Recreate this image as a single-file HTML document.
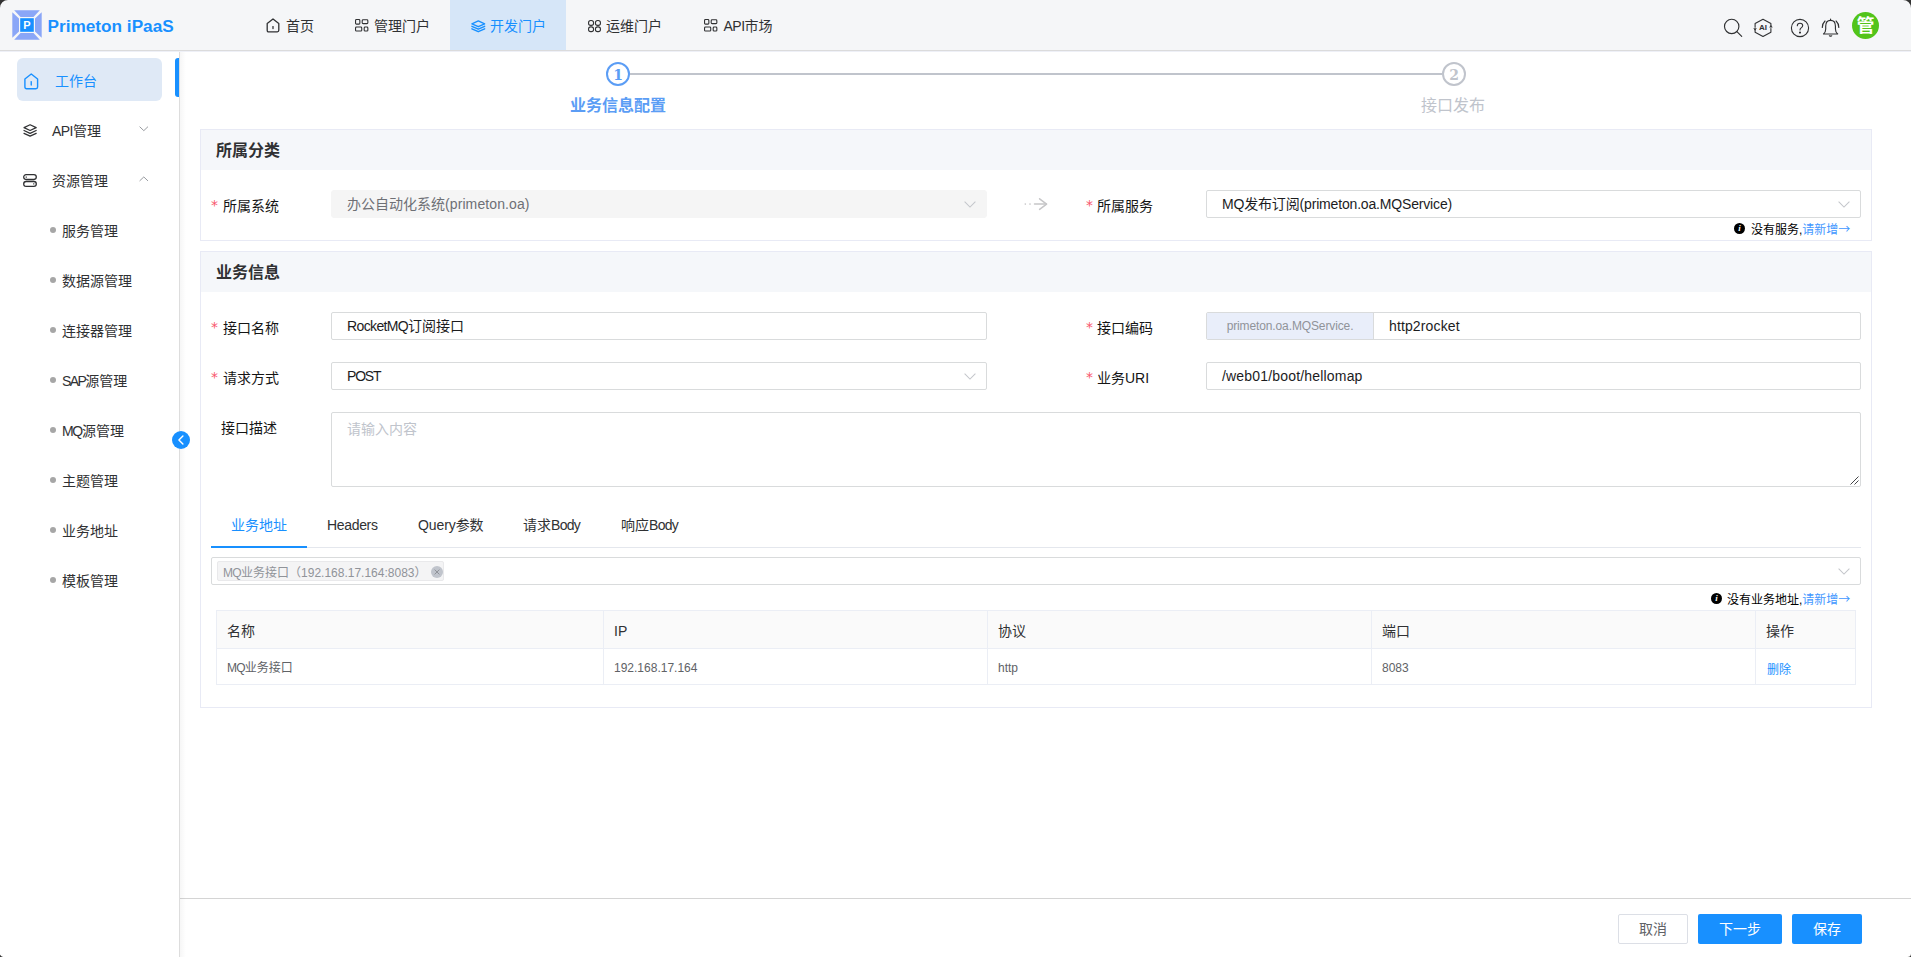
<!DOCTYPE html>
<html lang="zh-CN">
<head>
<meta charset="utf-8">
<title>Primeton iPaaS</title>
<style>
*{box-sizing:border-box;margin:0;padding:0}
html,body{width:1911px;height:957px;overflow:hidden;background:#fff}
body{font-family:"Liberation Sans","Noto Sans CJK SC",sans-serif;font-size:14px;color:#303133;position:relative}
.abs{position:absolute}
.t{position:absolute;white-space:nowrap;line-height:20px;height:20px}
svg{display:block;position:absolute;overflow:visible}

/* header */
#hd{position:absolute;left:0;top:0;width:1911px;height:50px;background:#f5f6f8;box-shadow:0 1px 0 #dbdbdc,0 2px 0 #eef0f7;z-index:5}
#brand{left:47.6px;top:14.3px;font-size:17.2px;font-weight:bold;color:#1890ff;line-height:24px;height:24px}
.nav{position:absolute;top:0;height:50px}
.nav.on{background:#d6e6f8}
.nav .t{top:16px;color:#303133}
.nav.on .t{color:#1890ff}

/* sidebar */
#sb{position:absolute;left:0;top:50px;width:180px;height:907px;background:#fff;border-right:1px solid #dddddd;z-index:2}
#sbshadow{position:absolute;left:180px;top:50px;width:6px;height:907px;background:linear-gradient(90deg,rgba(0,0,0,.035),rgba(0,0,0,0));z-index:1}
.mi{position:absolute;left:0;width:179px;height:50px}
.mi .t{top:16px}
.sub .t{left:62px;color:#303133}
.sub i{position:absolute;left:50px;top:22px;width:6px;height:6px;border-radius:50%;background:#a6a6a6}

/* main */
.panel{position:absolute;left:200px;width:1672px;border:1px solid #e8eaf5;background:#fff}
.ph{position:absolute;left:0;top:0;width:1670px;height:40px;background:#f5f7fa}
.ph .t{left:15px;top:10px;font-size:16px;font-weight:bold;line-height:22px;height:22px;color:#303133}
.lb{color:#151515}
.req{color:#f8566c;font-family:'DejaVu Sans',sans-serif;margin-top:-0.7px}
.inp{position:absolute;height:28px;border:1px solid #d9dbdc;border-radius:2px;background:#fff}
.inp .t{left:15px;top:3px;color:#1c1c1e}
.hint{font-size:12px;line-height:16px;height:16px}
.lnk{color:#1890ff}
.btn{position:absolute;top:914px;height:30px;border-radius:2px;font-size:14px;text-align:center;line-height:30px}
</style>
</head>
<body>

<!-- ================= HEADER ================= -->
<div id="hd">
  <svg style="left:12px;top:10px" width="30" height="30" viewBox="0 0 30 30">
    <polygon points="2.2,0.3 27.8,0.3 21.5,7 8.5,7" fill="#8aa6f7"/>
    <polygon points="2.2,29.7 27.8,29.7 21.5,23 8.5,23" fill="#8aa6f7"/>
    <polygon points="0.3,2.2 0.3,27.8 7,21.5 7,8.5" fill="#8aa6f7"/>
    <polygon points="29.7,2.2 29.7,27.8 23,21.5 23,8.5" fill="#8aa6f7"/>
    <rect x="8.2" y="8.2" width="13.6" height="13.6" fill="#1890ff"/>
    <text x="15" y="19.2" font-size="11" font-weight="bold" fill="#fff" text-anchor="middle" font-family="Liberation Sans, sans-serif">P</text>
  </svg>
  <div id="brand" class="t">Primeton iPaaS</div>

  <div class="nav" style="left:246px;width:88px">
    <svg style="left:20px;top:18px" width="14" height="15" viewBox="0 0 14 15" fill="none" stroke="#303133" stroke-width="1.3" stroke-linejoin="round" stroke-linecap="round"><path d="M1.2 5.6 L7 1 L12.8 5.6 V12.3 Q12.8 13.8 11.3 13.8 H2.7 Q1.2 13.8 1.2 12.3 Z"/><path d="M7 8.6 V10.6"/></svg>
    <div class="t" style="left:40px">首页</div>
  </div>
  <div class="nav" style="left:334px;width:116px">
    <svg style="left:20.9px;top:19.4px" width="13.4" height="12.6" viewBox="0 0 13.4 12.6" fill="none" stroke="#303133" stroke-width="1.1"><rect x="0.55" y="0.55" width="4.3" height="4.6" rx="0.9"/><rect x="7.2" y="0.75" width="5.65" height="3.9" rx="0.9"/><rect x="0.55" y="8.05" width="6.2" height="4" rx="0.9"/><rect x="9.2" y="8.05" width="3.65" height="4" rx="0.9"/></svg>
    <div class="t" style="left:40px">管理门户</div>
  </div>
  <div class="nav on" style="left:450px;width:116px">
    <svg style="left:20.6px;top:19.6px" width="14.6" height="12.6" viewBox="0 0 14.6 12.6" fill="none" stroke="#1890ff" stroke-width="1.4" stroke-linejoin="round" stroke-linecap="round"><path d="M7.3 0.9 L13.7 3.8 L7.3 6.7 L0.9 3.8 Z"/><path d="M0.9 6.3 L7.3 9.2 L13.7 6.3"/><path d="M0.9 8.8 L7.3 11.7 L13.7 8.8"/></svg>
    <div class="t" style="left:40px">开发门户</div>
  </div>
  <div class="nav" style="left:566px;width:116px">
    <svg style="left:21.9px;top:19.8px" width="13" height="12.2" viewBox="0 0 13 12.2" fill="none" stroke="#303133" stroke-width="1.1"><rect x="0.55" y="0.55" width="5" height="4.8" rx="2.2"/><rect x="7.45" y="0.55" width="5" height="4.8" rx="2.2"/><rect x="0.55" y="6.85" width="5" height="4.8" rx="2.2"/><rect x="7.45" y="6.85" width="5" height="4.8" rx="2.2"/></svg>
    <div class="t" style="left:40px">运维门户</div>
  </div>
  <div class="nav" style="left:682px;width:110px">
    <svg style="left:21.9px;top:19.4px" width="13.4" height="12.6" viewBox="0 0 13.4 12.6" fill="none" stroke="#303133" stroke-width="1.1"><rect x="0.55" y="0.55" width="4.3" height="4.6" rx="0.9"/><rect x="7.2" y="0.75" width="5.65" height="3.9" rx="0.9"/><rect x="0.55" y="8.05" width="6.2" height="4" rx="0.9"/><rect x="9.2" y="8.05" width="3.65" height="4" rx="0.9"/></svg>
    <div class="t" style="left:41.5px"><span style="letter-spacing:-0.5px">API</span>市场</div>
  </div>

  <!-- right icons -->
  <svg style="left:1723px;top:18px" width="20" height="20" viewBox="0 0 20 20" fill="none" stroke="#303133" stroke-width="1.15" stroke-linecap="round"><circle cx="8.7" cy="8.4" r="7.2"/><path d="M13.9 13.6 L18.7 18.4"/></svg>
  <svg style="left:1753px;top:18px" width="20" height="20" viewBox="0 0 20 20" fill="none" stroke="#303133" stroke-width="1.1" stroke-linejoin="round" stroke-linecap="round"><path d="M10 1.3 L17.9 5.6 V8.4 M17.9 10.6 V14.2 L10 18.5 L2.1 14.2 V11.4 M2.1 9.2 V5.6 L10 1.3"/><path d="M16.9 9 L18 7.6 L19 9 Z" fill="#303133" stroke-width="0.6"/><path d="M1 10.8 L2 12.2 L3.1 10.8 Z" fill="#303133" stroke-width="0.6"/><text x="10" y="12.3" font-size="8" font-weight="bold" fill="#303133" stroke="none" text-anchor="middle" font-family="Liberation Sans, sans-serif">AI</text></svg>
  <svg style="left:1790px;top:18px" width="20" height="20" viewBox="0 0 20 20" fill="none" stroke="#303133" stroke-width="1.1" stroke-linecap="round"><circle cx="10" cy="10" r="8.6"/><path d="M7.3 7.8 Q7.3 5.2 10 5.2 Q12.7 5.2 12.7 7.6 Q12.7 9 11.2 9.9 Q10 10.7 10 12"/><circle cx="10" cy="14.6" r="0.5" fill="#303133"/></svg>
  <svg style="left:1821px;top:18px" width="19" height="20" viewBox="0 0 19 20" fill="none" stroke="#303133" stroke-width="1.15" stroke-linecap="round" stroke-linejoin="round"><path d="M2.5 16 Q4.7 14.4 4.7 11 V8.2 Q4.7 2.3 9.57 2.3 Q14.44 2.3 14.44 8.2 V11 Q14.44 14.4 16.7 16 Z"/><path d="M9.57 1 V2.2"/><path d="M8.2 17.9 Q9.57 19.3 10.9 17.9 Z" fill="#303133" stroke-width="0.6"/><path d="M4 3 Q1.3 5.6 1.3 9.4"/><path d="M15.1 3 Q17.8 5.6 17.8 9.4"/></svg>
  <div class="abs" style="left:1852px;top:12px;width:27px;height:27px;border-radius:50%;background:#52c41a"></div>
  <div class="t" style="left:1852px;top:15px;width:27px;text-align:center;color:#fff;font-weight:bold;font-size:18px;line-height:22px;height:22px">管</div>
</div>

<!-- ================= SIDEBAR ================= -->
<div id="sbshadow"></div>
<div id="sb">
  <div class="abs" style="left:17px;top:8px;width:145px;height:43px;border-radius:6px;background:#dfe9f6"></div>
  <div class="abs" style="left:175px;top:8px;width:4px;height:39px;border-radius:3px 0 0 3px;background:#1890ff"></div>
  <div class="mi" style="top:5px">
    <svg style="left:23.8px;top:17.6px" width="14.5" height="16.6" viewBox="0 0 14.5 16.6" fill="none" stroke="#1890ff" stroke-width="1.4" stroke-linejoin="round" stroke-linecap="round"><path d="M0.9 6 L7.25 1 L13.6 6 V14 Q13.6 15.7 11.9 15.7 H2.6 Q0.9 15.7 0.9 14 Z"/><path d="M7.25 8.6 V12"/></svg>
    <div class="t" style="left:55px;color:#1890ff">工作台</div>
  </div>
  <div class="mi" style="top:55px">
    <svg style="left:23px;top:19.3px" width="14.2" height="13.2" viewBox="0 0 14 13" fill="none" stroke="#303133" stroke-width="1.2" stroke-linejoin="round" stroke-linecap="round"><path d="M7 0.8 L13 3.6 L7 6.4 L1 3.6 Z"/><path d="M1 6.4 L7 9.2 L13 6.4"/><path d="M1 9.2 L7 12 L13 9.2"/></svg>
    <div class="t" style="left:52px"><span style="letter-spacing:-0.55px">API</span>管理</div>
    <svg style="left:139.3px;top:20.6px" width="9.6" height="5.6" viewBox="0 0 10 6" fill="none" stroke="#909399" stroke-width="1"><path d="M0.5 0.7 L5 5 L9.5 0.7"/></svg>
  </div>
  <div class="mi" style="top:105px">
    <svg style="left:23px;top:19px" width="14" height="13" viewBox="0 0 14 13" fill="none" stroke="#303133" stroke-width="1.3"><rect x="0.7" y="0.7" width="12.6" height="4.8" rx="2.4"/><rect x="0.7" y="7.5" width="12.6" height="4.8" rx="2.4"/><path d="M2.6 3.1 H4" stroke-width="1"/><path d="M10 9.9 H11.4" stroke-width="1"/></svg>
    <div class="t" style="left:52px">资源管理</div>
    <svg style="left:139.3px;top:21.3px" width="9.6" height="5.6" viewBox="0 0 10 6" fill="none" stroke="#909399" stroke-width="1"><path d="M0.5 5.3 L5 1 L9.5 5.3"/></svg>
  </div>
  <div class="mi sub" style="top:155px"><i></i><div class="t">服务管理</div></div>
  <div class="mi sub" style="top:205px"><i></i><div class="t">数据源管理</div></div>
  <div class="mi sub" style="top:255px"><i></i><div class="t">连接器管理</div></div>
  <div class="mi sub" style="top:305px"><i></i><div class="t"><span style="letter-spacing:-1.6px">SAP</span>源管理</div></div>
  <div class="mi sub" style="top:355px"><i></i><div class="t"><span style="letter-spacing:-1.3px">MQ</span>源管理</div></div>
  <div class="mi sub" style="top:405px"><i></i><div class="t">主题管理</div></div>
  <div class="mi sub" style="top:455px"><i></i><div class="t">业务地址</div></div>
  <div class="mi sub" style="top:505px"><i></i><div class="t">模板管理</div></div>
</div>
<div class="abs" style="left:172px;top:431px;width:18px;height:18px;border-radius:50%;background:#1890ff;z-index:3"></div>
<svg style="left:176.8px;top:434.6px;z-index:4" width="8" height="10" viewBox="0 0 8 10" fill="none" stroke="#fff" stroke-width="1.4" stroke-linecap="round" stroke-linejoin="round"><path d="M5.9 0.9 L1.9 5 L5.9 9.1"/></svg>

<!-- ================= STEPS ================= -->
<div class="abs" style="left:630px;top:73px;width:812px;height:2px;background:#c0c4cc"></div>
<div class="abs" style="left:606px;top:62px;width:24px;height:24px;border-radius:50%;border:2px solid #5b9df5;background:#fff"></div>
<div class="t" style="left:606px;top:64px;width:24px;text-align:center;color:#5b9df5;font-weight:bold;font-size:14px;line-height:22px;height:22px;font-family:'DejaVu Serif','Liberation Serif',serif">1</div>
<div class="t" style="left:538px;top:95px;width:160px;text-align:center;color:#5b9df5;font-weight:bold;font-size:16px;line-height:22px;height:22px">业务信息配置</div>
<div class="abs" style="left:1442px;top:62px;width:24px;height:24px;border-radius:50%;border:2px solid #c0c4cc;background:#fff"></div>
<div class="t" style="left:1442px;top:64px;width:24px;text-align:center;color:#c0c4cc;font-weight:bold;font-size:14px;line-height:22px;height:22px;font-family:'DejaVu Serif','Liberation Serif',serif">2</div>
<div class="t" style="left:1373px;top:95px;width:160px;text-align:center;color:#c0c4cc;font-size:16px;line-height:22px;height:22px">接口发布</div>

<!-- ================= PANEL 1 ================= -->
<div class="panel" style="top:129px;height:112px">
  <div class="ph"><div class="t">所属分类</div></div>
</div>
<div class="t req" style="left:211px;top:196px">*</div>
<div class="t lb" style="left:223px;top:196px">所属系统</div>
<div class="inp" style="left:331px;top:190px;width:656px;background:#f5f5f5;border-color:#f5f5f5;border-radius:3px"><div class="t" style="color:#6e7075">办公自动化系统<span style="letter-spacing:0.1px">(primeton.oa)</span></div></div>
<svg style="left:963.5px;top:200.8px" width="12" height="7" viewBox="0 0 12 7" fill="none" stroke="#c4c6cb" stroke-width="1.05"><path d="M0.6 0.6 L6 6 L11.4 0.6"/></svg>
<svg style="left:1024px;top:198.4px" width="24" height="12.2" viewBox="0 0 24 12.2" fill="none" stroke="#c6c6c8" stroke-width="1.5" stroke-linecap="round" stroke-linejoin="round"><path d="M10.5 6.1 H22.4"/><path d="M15.6 0.8 L22.6 6.1 L15.6 11.4"/><circle cx="1.3" cy="6.1" r="0.8" fill="#c6c6c8" stroke="none"/><circle cx="6" cy="6.1" r="0.8" fill="#c6c6c8" stroke="none"/></svg>
<div class="t req" style="left:1086px;top:196px">*</div>
<div class="t lb" style="left:1097px;top:196px">所属服务</div>
<div class="inp" style="left:1206px;top:190px;width:655px"><div class="t" style="letter-spacing:-0.17px">MQ发布订阅(primeton.oa.MQService)</div></div>
<svg style="left:1837.5px;top:200.8px" width="12" height="7" viewBox="0 0 12 7" fill="none" stroke="#c4c6cb" stroke-width="1.05"><path d="M0.6 0.6 L6 6 L11.4 0.6"/></svg>
<div class="abs" style="left:1734px;top:223px;width:11px;height:11px;border-radius:50%;background:#000"></div>
<div class="t" style="left:1734px;top:223px;width:11px;height:11px;line-height:11px;font-size:9px;font-weight:bold;font-style:italic;color:#fff;text-align:center;font-family:'Liberation Serif',serif">i</div>
<div class="t hint" style="left:1751px;top:221px"><span style="color:#000">没有服务,</span><span class="lnk" style="color:#3f97ff">请新增<span style="font-family:'Noto Sans CJK SC',sans-serif">→</span></span></div>

<!-- ================= PANEL 2 ================= -->
<div class="panel" style="top:251px;height:457px">
  <div class="ph"><div class="t">业务信息</div></div>
</div>
<div class="t req" style="left:211px;top:318px">*</div>
<div class="t lb" style="left:223px;top:318px">接口名称</div>
<div class="inp" style="left:331px;top:312px;width:656px"><div class="t"><span style="letter-spacing:-0.63px">RocketMQ</span>订阅接口</div></div>
<div class="t req" style="left:1086px;top:318px">*</div>
<div class="t lb" style="left:1097px;top:318px">接口编码</div>
<div class="inp" style="left:1206px;top:312px;width:655px"></div>
<div class="abs" style="left:1207px;top:313px;width:167px;height:26px;background:#e9eefa;border-right:1px solid #d9dbdc"></div>
<div class="t" style="left:1207px;top:316px;width:166px;text-align:center;font-size:12px;color:#909399;letter-spacing:-0.12px">primeton.oa.MQService.</div>
<div class="t" style="left:1389px;top:316px;color:#1c1c1e"><span style="letter-spacing:0.13px">http2rocket</span></div>

<div class="t req" style="left:211px;top:368px">*</div>
<div class="t lb" style="left:223px;top:368px">请求方式</div>
<div class="inp" style="left:331px;top:362px;width:656px"><div class="t"><span style="letter-spacing:-1.18px">POST</span></div></div>
<svg style="left:963.5px;top:372.8px" width="12" height="7" viewBox="0 0 12 7" fill="none" stroke="#c4c6cb" stroke-width="1.05"><path d="M0.6 0.6 L6 6 L11.4 0.6"/></svg>
<div class="t req" style="left:1086px;top:368px">*</div>
<div class="t lb" style="left:1097px;top:368px">业务URI</div>
<div class="inp" style="left:1206px;top:362px;width:655px"><div class="t"><span style="letter-spacing:0.18px">/web01/boot/hellomap</span></div></div>

<div class="t lb" style="left:221px;top:418px">接口描述</div>
<div class="inp" style="left:331px;top:412px;width:1530px;height:75px"><div class="t" style="top:6px;color:#c0c4cc">请输入内容</div></div>
<svg style="left:1850px;top:476px" width="9" height="9" viewBox="0 0 9 9" fill="none" stroke="#303133" stroke-width="0.9"><path d="M0.5 8.5 L8.5 0.5"/><path d="M4.5 8.5 L8.5 4.5"/></svg>

<!-- tabs -->
<div class="abs" style="left:211px;top:547px;width:1650px;height:1px;background:#e4e7ed"></div>
<div class="abs" style="left:211px;top:546px;width:96px;height:2px;background:#1890ff"></div>
<div class="t lnk" style="left:231px;top:515px">业务地址</div>
<div class="t" style="left:327px;top:515px;letter-spacing:-0.33px">Headers</div>
<div class="t" style="left:418px;top:515px"><span style="letter-spacing:-0.1px">Query</span>参数</div>
<div class="t" style="left:523px;top:515px">请求<span style="letter-spacing:-0.68px">Body</span></div>
<div class="t" style="left:621px;top:515px">响应<span style="letter-spacing:-0.68px">Body</span></div>

<!-- multi select -->
<div class="inp" style="left:211px;top:557px;width:1650px"></div>
<div class="abs" style="left:217px;top:561px;width:227px;height:20px;background:#f4f4f5;border:1px solid #e9e9eb;border-radius:2px"></div>
<div class="t" style="left:223px;top:565px;font-size:12px;line-height:16px;height:16px;color:#909399"><span style="letter-spacing:-0.65px">MQ</span>业务接口（192.168.17.164:8083）</div>
<div class="abs" style="left:431px;top:566px;width:12px;height:12px;border-radius:50%;background:#c0c4cc"></div>
<svg style="left:434px;top:569px" width="6" height="6" viewBox="0 0 6 6" fill="none" stroke="#909399" stroke-width="1"><path d="M0.6 0.6 L5.4 5.4 M5.4 0.6 L0.6 5.4"/></svg>
<svg style="left:1837.5px;top:567.8px" width="12" height="7" viewBox="0 0 12 7" fill="none" stroke="#c4c6cb" stroke-width="1.05"><path d="M0.6 0.6 L6 6 L11.4 0.6"/></svg>
<div class="abs" style="left:1711px;top:593px;width:11px;height:11px;border-radius:50%;background:#000"></div>
<div class="t" style="left:1711px;top:593px;width:11px;height:11px;line-height:11px;font-size:9px;font-weight:bold;font-style:italic;color:#fff;text-align:center;font-family:'Liberation Serif',serif">i</div>
<div class="t hint" style="left:1727px;top:591px"><span style="color:#000">没有业务地址,</span><span class="lnk" style="color:#3f97ff">请新增<span style="font-family:'Noto Sans CJK SC',sans-serif">→</span></span></div>

<!-- table -->
<div class="abs" style="left:216px;top:610px;width:1640px;height:75px;border:1px solid #ebeef5;background:#fff"></div>
<div class="abs" style="left:217px;top:611px;width:1638px;height:38px;background:#fafafa;border-bottom:1px solid #ebeef5"></div>
<div class="abs" style="left:603px;top:611px;width:1px;height:73px;background:#ebeef5"></div>
<div class="abs" style="left:987px;top:611px;width:1px;height:73px;background:#ebeef5"></div>
<div class="abs" style="left:1371px;top:611px;width:1px;height:73px;background:#ebeef5"></div>
<div class="abs" style="left:1755px;top:611px;width:1px;height:73px;background:#ebeef5"></div>
<div class="t" style="left:227px;top:621px">名称</div>
<div class="t" style="left:614px;top:621px">IP</div>
<div class="t" style="left:998px;top:621px">协议</div>
<div class="t" style="left:1382px;top:621px">端口</div>
<div class="t" style="left:1766px;top:621px">操作</div>
<div class="t" style="left:227px;top:658px;font-size:12px;color:#606266"><span style="letter-spacing:-0.8px">MQ</span>业务接口</div>
<div class="t" style="left:614px;top:658px;font-size:12px;color:#606266">192.168.17.164</div>
<div class="t" style="left:998px;top:658px;font-size:12px;color:#606266">http</div>
<div class="t" style="left:1382px;top:658px;font-size:12px;color:#606266">8083</div>
<div class="t lnk" style="left:1767px;top:659.5px;font-size:12px">删除</div>

<!-- ================= FOOTER ================= -->
<div class="abs" style="left:180px;top:898px;width:1731px;height:1px;background:#d4d4d4"></div>
<div class="btn" style="left:1618px;width:70px;border:1px solid #dcdfe6;background:#fff;color:#606266;line-height:28px">取消</div>
<div class="btn" style="left:1698px;width:84px;background:#1890ff;color:#fff">下一步</div>
<div class="btn" style="left:1792px;width:70px;background:#1890ff;color:#fff">保存</div>

<!-- window corners -->
<svg style="left:0;top:0;z-index:9" width="8" height="8" viewBox="0 0 8 8"><path d="M0 0 H8 A8 8 0 0 0 0 8 Z" fill="#333"/></svg>
<svg style="left:1903px;top:0;z-index:9" width="8" height="8" viewBox="0 0 8 8"><path d="M8 0 H0 A8 8 0 0 1 8 8 Z" fill="#333"/></svg>
<svg style="left:0;top:951px;z-index:9" width="6" height="6" viewBox="0 0 6 6"><path d="M0 6 H4 A4 4 0 0 1 0 0.5 Z" fill="#333"/></svg>
<svg style="left:1907px;top:953px;z-index:9" width="4" height="4" viewBox="0 0 4 4"><path d="M4 4 H0.5 A3.5 3.5 0 0 0 4 0.5 Z" fill="#333"/></svg>


</body>
</html>
